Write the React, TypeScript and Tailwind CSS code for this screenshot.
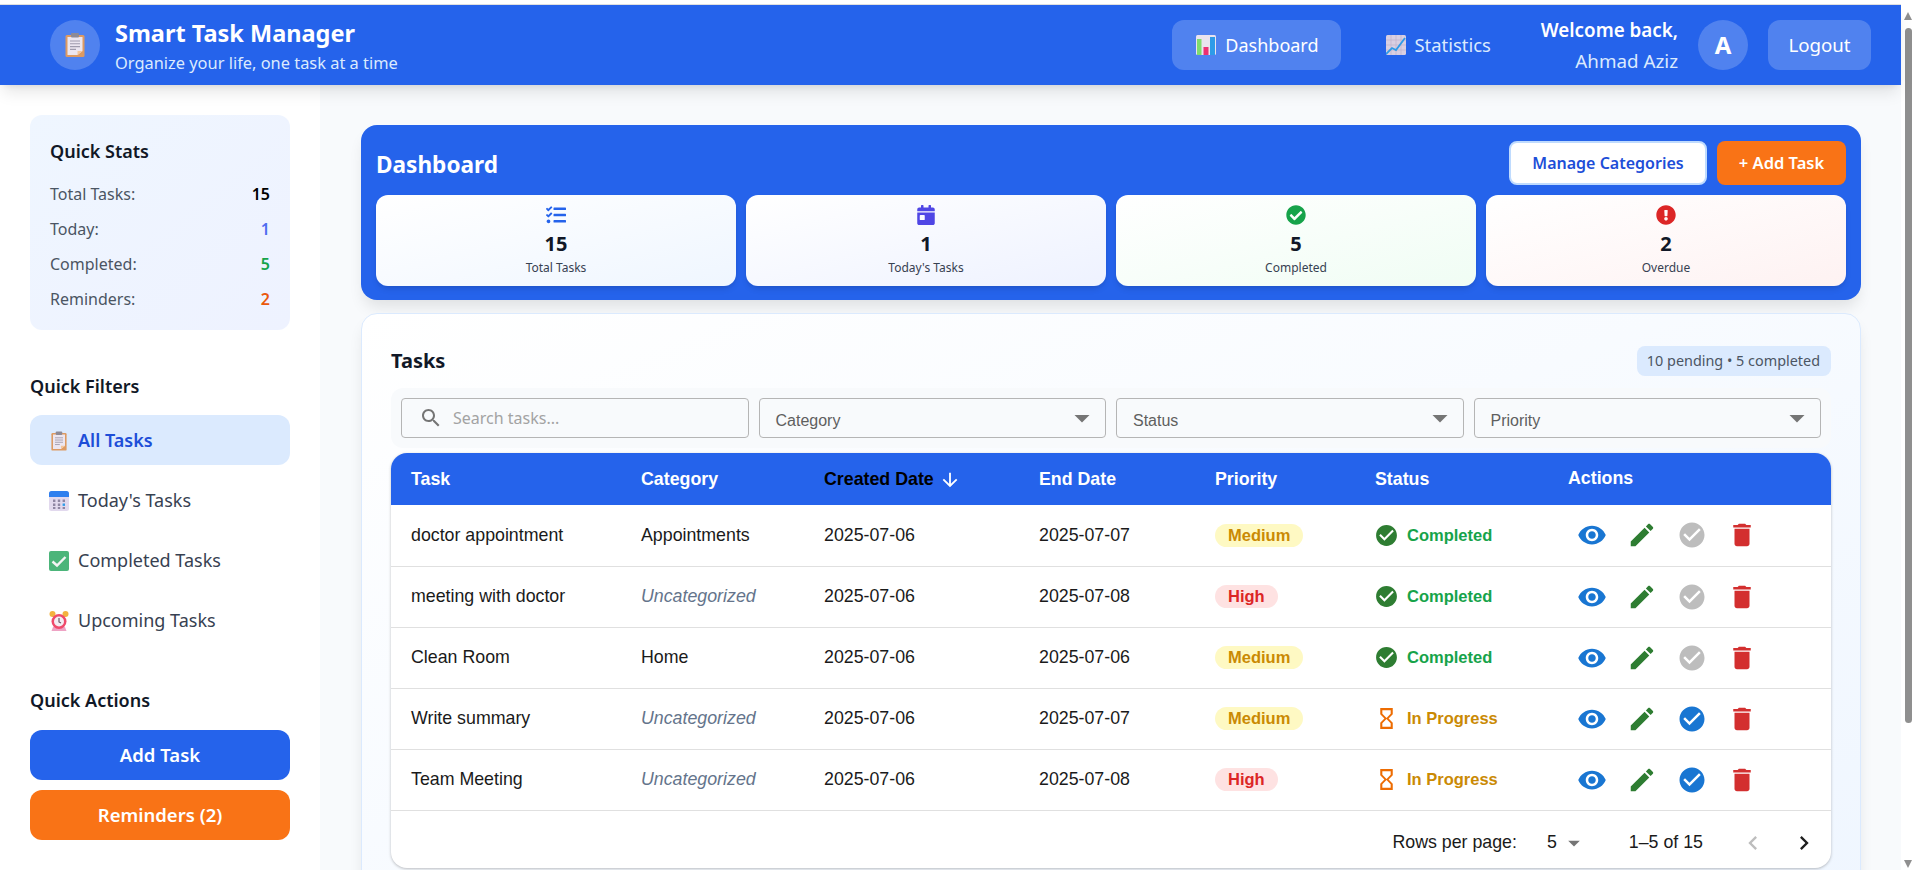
import { FaCalendarDay, FaCheckCircle, FaExclamationCircle, FaTasks } from "react-icons/fa";

const paths = {
  check: "M12 2C6.48 2 2 6.48 2 12s4.48 10 10 10 10-4.48 10-10S17.52 2 12 2zm-2 15l-5-5 1.41-1.41L10 14.17l7.59-7.59L19 8l-9 9z",
  hourglass: "M6 2v6h.01L6 8.01 10 12l-4 4 .01.01H6V22h12v-5.99h-.01L18 16l-4-4 4-3.99-.01-.01H18V2H6zm10 14.5V20H8v-3.5l4-4 4 4zm-4-5l-4-4V4h8v3.5l-4 4z",
  eye: "M12 4.5C7 4.5 2.73 7.61 1 12c1.73 4.39 6 7.5 11 7.5s9.27-3.11 11-7.5c-1.73-4.39-6-7.5-11-7.5zM12 17c-2.76 0-5-2.24-5-5s2.24-5 5-5 5 2.24 5 5-2.24 5-5 5zm0-8c-1.66 0-3 1.34-3 3s1.34 3 3 3 3-1.34 3-3-1.34-3-3-3z",
  edit: "M3 17.25V21h3.75L17.81 9.94l-3.75-3.75L3 17.25zM20.71 7.04c.39-.39.39-1.02 0-1.41l-2.34-2.34c-.39-.39-1.02-.39-1.41 0l-1.83 1.83 3.75 3.75 1.83-1.83z",
  trash: "M6 19c0 1.1.9 2 2 2h8c1.1 0 2-.9 2-2V7H6v12zM19 4h-3.5l-1-1h-5l-1 1H5v2h14V4z",
  arrowDown: "M20 12l-1.41-1.41L13 16.17V4h-2v12.17l-5.58-5.59L4 12l8 8 8-8z",
  search: "M15.5 14h-.79l-.28-.27C15.41 12.59 16 11.11 16 9.5 16 5.91 13.09 3 9.5 3S3 5.91 3 9.5 5.91 16 9.5 16c1.61 0 3.09-.59 4.23-1.57l.27.28v.79l5 4.99L20.49 19l-4.99-5zm-6 0C7.01 14 5 11.99 5 9.5S7.01 5 9.5 5 14 7.01 14 9.5 11.99 14 9.5 14z",
  dropDown: "M7 10l5 5 5-5z",
  chevronLeft: "M15.41 7.41 14 6l-6 6 6 6 1.41-1.41L10.83 12z",
  chevronRight: "M10 6 8.59 7.41 13.17 12l-4.58 4.59L10 18l6-6z",
};

function Icon({ d, className }: { d: string; className: string }) {
  return (
    <svg viewBox="0 0 24 24" fill="currentColor" className={className}>
      <path d={d} />
    </svg>
  );
}

function ClipboardEmoji({ className }: { className: string }) {
  return (
    <svg viewBox="0 0 20 24" className={className}>
      <rect x="0.5" y="2" width="19" height="22" rx="1.5" fill="#dd9a62" />
      <path d="M2.5 4h15v14l-5 4h-10z" fill="#ece6f0" />
      <path d="M12.5 22l5-4h-5z" fill="#f3c59a" />
      <rect x="6" y="0" width="8" height="4.5" rx="1" fill="#8d8a96" />
      <path d="M5 8h10M5 10.8h10M5 13.6h10M5 16.4h6" stroke="#a09cad" strokeWidth="1.1" />
    </svg>
  );
}

function BarsEmoji({ className }: { className: string }) {
  return (
    <svg viewBox="0 0 20 20" className={className}>
      <rect width="20" height="20" rx="1.5" fill="#e9e3ee" />
      <rect x="1" y="4" width="4.5" height="16" fill="#7fdc6e" />
      <rect x="7.5" y="12" width="5" height="8" fill="#ee2f72" />
      <rect x="14" y="2" width="5" height="18" fill="#2f9be8" />
    </svg>
  );
}

function LineEmoji({ className }: { className: string }) {
  return (
    <svg viewBox="0 0 20 20" className={className}>
      <rect width="20" height="20" rx="1.5" fill="#d9cfe2" />
      <path d="M0 5h20M0 10h20M0 15h20M5 0v20M10 0v20M15 0v20" stroke="#bfb2cc" strokeWidth="0.7" />
      <path d="M0 19l6-6 4 2L19 3" fill="none" stroke="#2f9be8" strokeWidth="1.8" />
    </svg>
  );
}

function CalendarEmoji({ className }: { className: string }) {
  return (
    <svg viewBox="0 0 20 20" className={className}>
      <rect width="20" height="20" rx="2.5" fill="#e2d9ee" />
      <path d="M0 6V2.5A2.5 2.5 0 0 1 2.5 0h15A2.5 2.5 0 0 1 20 2.5V6z" fill="#2f7fee" />
      <path d="M4 8.5h2.4v2.4H4zM8.8 8.5h2.4v2.4H8.8zM13.6 8.5H16v2.4h-2.4zM4 12.5h2.4v2.4H4zM8.8 12.5h2.4v2.4H8.8zM4 16h2.4v2H4zM8.8 16h2.4v2H8.8zM13.6 16H16v2h-2.4z" fill="#8f86a3" />
      <path d="M13.6 12.5H16v2.4h-2.4z" fill="#2f9be8" />
    </svg>
  );
}

function CheckEmoji({ className }: { className: string }) {
  return (
    <svg viewBox="0 0 20 20" className={className}>
      <rect width="20" height="20" rx="2" fill="#4cb57a" />
      <path d="M3.5 10.5l4.5 4 8.5-8.5" fill="none" stroke="#f4f4f4" strokeWidth="2.4" />
    </svg>
  );
}

function AlarmEmoji({ className }: { className: string }) {
  return (
    <svg viewBox="0 0 20 20" className={className}>
      <circle cx="3.5" cy="3" r="3" fill="#f3b23f" />
      <circle cx="16.5" cy="3" r="3" fill="#f3b23f" />
      <path d="M4 16l-1.5 4h15L16 16z" fill="#eea3c4" />
      <circle cx="10" cy="10.5" r="7.5" fill="#ef4a6b" />
      <circle cx="10" cy="10.5" r="5" fill="#f3edf3" />
      <path d="M10 7v4l2 1" fill="none" stroke="#6b5a6a" strokeWidth="1.2" />
    </svg>
  );
}

const quickStats = [
  { label: "Total Tasks:", value: "15", color: "text-black" },
  { label: "Today:", value: "1", color: "text-[#4f6ef0]" },
  { label: "Completed:", value: "5", color: "text-[#16a34a]" },
  { label: "Reminders:", value: "2", color: "text-[#ea580c]" },
];

const quickFilters = [
  { label: "All Tasks", icon: <ClipboardEmoji className="h-5 w-4" />, active: true },
  { label: "Today's Tasks", icon: <CalendarEmoji className="h-5 w-5" />, active: false },
  { label: "Completed Tasks", icon: <CheckEmoji className="h-5 w-5" />, active: false },
  { label: "Upcoming Tasks", icon: <AlarmEmoji className="h-5 w-5" />, active: false },
];

const statCards = [
  { label: "Total Tasks", value: "15", icon: <FaTasks className="h-5 w-5 text-[#2563eb]" />, bg: "to-[#eff6ff]" },
  { label: "Today's Tasks", value: "1", icon: <FaCalendarDay className="h-5 w-5 text-[#4f46e5]" />, bg: "to-[#eef2ff]" },
  { label: "Completed", value: "5", icon: <FaCheckCircle className="h-5 w-5 text-[#16a34a]" />, bg: "to-[#f0fdf4]" },
  { label: "Overdue", value: "2", icon: <FaExclamationCircle className="h-5 w-5 text-[#dc2626]" />, bg: "to-[#fef2f2]" },
];

const tasks = [
  { name: "doctor appointment", category: "Appointments", created: "2025-07-06", end: "2025-07-07", priority: "Medium", done: true },
  { name: "meeting with doctor", category: "", created: "2025-07-06", end: "2025-07-08", priority: "High", done: true },
  { name: "Clean Room", category: "Home", created: "2025-07-06", end: "2025-07-06", priority: "Medium", done: true },
  { name: "Write summary", category: "", created: "2025-07-06", end: "2025-07-07", priority: "Medium", done: false },
  { name: "Team Meeting", category: "", created: "2025-07-06", end: "2025-07-08", priority: "High", done: false },
];

function SelectBox({ label }: { label: string }) {
  return (
    <div className="flex h-10 items-center justify-between rounded-[4px] border border-[#b5b5b5] pr-[5px] pl-4">
      <span className="pt-[6px] text-[16px] text-[#5f5f5f]">{label}</span>
      <Icon d={paths.dropDown} className="h-9 w-9 text-[#757575]" />
    </div>
  );
}

function Sidebar() {
  return (
    <aside className="flex w-80 shrink-0 flex-col bg-white px-[30px] pt-[30px] text-[#1f2937]">
      <div className="h-[215px] shrink-0 rounded-xl bg-gradient-to-br from-[#eff6ff] to-[#eef2ff] px-5 pt-[22px]">
        <h3 className="mb-[11px] text-[18px] leading-[28px] font-semibold text-[#111827]">Quick Stats</h3>
        {quickStats.map((stat) => (
          <div key={stat.label} className="flex h-[35px] items-center justify-between text-[16px] text-[#4b5563]">
            <span>{stat.label}</span>
            <span className={`font-semibold ${stat.color}`}>{stat.value}</span>
          </div>
        ))}
      </div>

      <h3 className="mt-[42px] mb-[15px] text-[18px] leading-[28px] font-semibold text-[#111827]">Quick Filters</h3>
      <div className="flex flex-col gap-[10px]">
        {quickFilters.map((filter) => (
          <div
            key={filter.label}
            className={`flex h-[50px] items-center rounded-xl pt-[1px] pl-[19px] text-[18px] ${
              filter.active ? "bg-[#dbeafe] font-semibold text-[#1d4ed8]" : "text-[#374151]"
            }`}
          >
            <span className="flex w-5 justify-center">{filter.icon}</span>
            <span className="ml-[9px]">{filter.label}</span>
          </div>
        ))}
      </div>

      <h3 className="mt-[41px] mb-4 text-[18px] leading-[28px] font-semibold text-[#111827]">Quick Actions</h3>
      <div className="flex h-[50px] shrink-0 items-center justify-center rounded-xl bg-[#2563eb] text-[18.5px] font-semibold text-white">
        Add Task
      </div>
      <div className="mt-[10px] flex h-[50px] shrink-0 items-center justify-center rounded-xl bg-[#f97316] text-[18.5px] font-semibold text-white">
        Reminders (2)
      </div>
    </aside>
  );
}

function Scrollbar() {
  return (
    <div className="flex w-[11px] shrink-0 flex-col items-end bg-white pt-3 pb-[2px]">
      <div className="h-0 w-0 border-x-[4px] border-b-[8px] border-x-transparent border-b-[#8f8f8f]" />
      <div className="mt-2 h-[695px] w-[7px] rounded-t-[4px] rounded-b-[4px] bg-[#8f8f8f]" />
      <div className="mt-auto h-0 w-0 border-x-[4px] border-t-[8px] border-x-transparent border-t-[#8f8f8f]" />
    </div>
  );
}

export default function App() {
  return (
    <div className="flex h-[870px] overflow-hidden bg-white font-['Noto_Sans',sans-serif]">
      <div className="flex min-w-0 flex-1 flex-col">
        <div className="h-[5px] shrink-0 border-b border-[#e0e0e0] bg-white" />
        <header className="relative z-10 flex h-20 shrink-0 items-center bg-[#2563eb] pr-[30px] pl-[50px] text-white shadow-[0_10px_15px_-3px_rgba(0,0,0,0.1),0_4px_6px_-4px_rgba(0,0,0,0.1)]">
          <div className="flex h-[50px] w-[50px] items-center justify-center rounded-full bg-white/20">
            <ClipboardEmoji className="h-6 w-5" />
          </div>
          <div className="ml-[15px] pt-[3px]">
            <h1 className="text-[23.5px] leading-[30px] font-bold">Smart Task Manager</h1>
            <p className="mt-[3px] text-[16.4px] leading-[24px] text-[#dbeafe]">Organize your life, one task at a time</p>
          </div>
          <nav className="ml-auto flex items-center gap-[25px] text-[18px]">
            <div className="flex h-[50px] items-center gap-[9px] rounded-xl bg-white/20 pr-[22px] pl-6">
              <BarsEmoji className="h-5 w-5" />
              Dashboard
            </div>
            <div className="flex h-[50px] items-center gap-[9px] px-5 text-[18.4px] text-[#dbeafe]">
              <LineEmoji className="h-5 w-5" />
              Statistics
            </div>
          </nav>
          <div className="ml-[30px] pt-[2px] text-right text-[18.8px] leading-[31px]">
            <div className="font-semibold">Welcome back,</div>
            <div className="text-[#dbeafe]">Ahmad Aziz</div>
          </div>
          <div className="ml-5 flex h-[50px] w-[50px] items-center justify-center rounded-full bg-white/20 text-[24px] font-bold">
            A
          </div>
          <div className="ml-5 flex h-[50px] w-[103px] items-center justify-center rounded-xl bg-white/20 text-[18.7px]">
            Logout
          </div>
        </header>

        <div className="flex min-h-0 flex-1">
          <Sidebar />
          <main className="min-w-0 flex-1 bg-[#f8fafc] pt-10 pr-10 pl-[41px]">
            <section className="h-[175px] rounded-2xl bg-[#2563eb] px-[15px] pt-4 shadow-[0_10px_15px_-3px_rgba(0,0,0,0.1)]">
              <div className="flex h-[44px] items-center justify-between">
                <h2 className="pt-[3px] text-[22.6px] font-bold text-white">Dashboard</h2>
                <div className="flex gap-[10px]">
                  <div className="flex h-[44px] w-[198px] items-center justify-center rounded-lg border-2 border-[#bfdbfe] bg-white text-[16px] font-semibold text-[#1d4ed8]">
                    Manage Categories
                  </div>
                  <div className="flex h-[44px] w-[129px] items-center justify-center rounded-lg bg-[#f97316] text-[16.5px] font-semibold text-white">
                    + Add Task
                  </div>
                </div>
              </div>
              <div className="mt-[10px] grid grid-cols-4 gap-[10px]">
                {statCards.map((card) => (
                  <div
                    key={card.label}
                    className={`flex h-[91px] flex-col items-center rounded-xl bg-gradient-to-br from-white pt-[10px] shadow-md ${card.bg}`}
                  >
                    {card.icon}
                    <div className="mt-[5px] text-[20px] leading-[28px] font-bold text-[#111827]">{card.value}</div>
                    <div className="mt-[1px] text-[12px] leading-[18px] text-[#374151]">{card.label}</div>
                  </div>
                ))}
              </div>
            </section>

            <section className="mt-[13px] h-[600px] rounded-2xl border border-[#dbeafe] bg-gradient-to-br from-white to-[#eff6ff] px-[29px] pt-[32px] shadow-[0_10px_15px_-3px_rgba(0,0,0,0.1)]">
              <div className="flex h-[30px] items-center justify-between">
                <h2 className="text-[20px] font-bold text-[#111827]">Tasks</h2>
                <span className="flex h-[30px] items-center rounded-lg bg-[#dbeafe] pr-[11px] pl-[10px] text-[14.4px] text-[#4b5563]">
                  10 pending • 5 completed
                </span>
              </div>

              <div className="mt-3 grid h-[60px] grid-cols-4 gap-[10px] rounded-xl bg-[#f8fafc] p-[10px] font-['Liberation_Sans',Arial,sans-serif]">
                <div className="flex h-10 items-center rounded-[4px] border border-[#b5b5b5] pl-[17px]">
                  <Icon d={paths.search} className="h-6 w-6 text-[#757575]" />
                  <span className="ml-[10px] font-['Noto_Sans',sans-serif] text-[16px] text-[#a3a3a3]">Search tasks...</span>
                </div>
                <SelectBox label="Category" />
                <SelectBox label="Status" />
                <SelectBox label="Priority" />
              </div>

              <div className="mt-[5px] h-[415px] overflow-hidden rounded-2xl bg-white font-['Liberation_Sans',Arial,sans-serif] shadow-[0_1px_3px_rgba(0,0,0,0.25)]">
                <table className="w-full table-fixed border-collapse text-left text-[17.8px] text-[#1a1a1a]">
                  <colgroup>
                    <col className="w-[230px]" />
                    <col className="w-[183px]" />
                    <col className="w-[215px]" />
                    <col className="w-[176px]" />
                    <col className="w-[160px]" />
                    <col className="w-[193px]" />
                    <col />
                  </colgroup>
                  <thead>
                    <tr className="h-[52px] bg-[#2563eb] font-bold text-white">
                      <th className="pt-[1px] pl-5">Task</th>
                      <th className="pt-[1px] pl-5">Category</th>
                      <th className="pt-[1px] pl-5 text-black">
                        <span className="flex items-center">
                          Created Date
                          <Icon d={paths.arrowDown} className="ml-[5px] h-[22px] w-[22px] text-white" />
                        </span>
                      </th>
                      <th className="pt-[1px] pl-5">End Date</th>
                      <th className="pt-[1px] pl-5">Priority</th>
                      <th className="pt-[1px] pl-5">Status</th>
                      <th className="pb-[2px] pl-5">Actions</th>
                    </tr>
                  </thead>
                  <tbody>
                    {tasks.map((task) => (
                      <tr key={task.name} className="h-[61px] border-b border-[#e0e0e0]">
                        <td className="pl-5">{task.name}</td>
                        <td className="pl-5">
                          {task.category || <span className="text-[#64748b] italic">Uncategorized</span>}
                        </td>
                        <td className="pl-5">{task.created}</td>
                        <td className="pl-5">{task.end}</td>
                        <td className="pl-5">
                          <span
                            className={`inline-flex h-[23px] items-center rounded-full px-[13px] text-[16.5px] font-bold ${
                              task.priority === "High" ? "bg-[#fee2e2] text-[#dc2626]" : "bg-[#fef9c3] text-[#ca8a04]"
                            }`}
                          >
                            {task.priority}
                          </span>
                        </td>
                        <td className="pl-[19px]">
                          <div
                            className={`flex items-center gap-2 text-[16.5px] font-bold ${
                              task.done ? "text-[#16a34a]" : "text-[#ca8a04]"
                            }`}
                          >
                            <Icon
                              d={task.done ? paths.check : paths.hourglass}
                              className={`h-[25px] w-[25px] ${task.done ? "text-[#2e7d32]" : "text-[#ed6c02]"}`}
                            />
                            {task.done ? "Completed" : "In Progress"}
                          </div>
                        </td>
                        <td className="pl-[29px]">
                          <div className="flex gap-5">
                            <Icon d={paths.eye} className="h-[30px] w-[30px] text-[#1976d2]" />
                            <Icon d={paths.edit} className="h-[30px] w-[30px] text-[#2e7d32]" />
                            <Icon d={paths.check} className={`h-[30px] w-[30px] ${task.done ? "text-[#bdbdbd]" : "text-[#1976d2]"}`} />
                            <Icon d={paths.trash} className="h-[30px] w-[30px] text-[#d32f2f]" />
                          </div>
                        </td>
                      </tr>
                    ))}
                  </tbody>
                </table>
                <div className="flex h-16 items-center justify-end pr-[13px] text-[17.8px] text-[#1a1a1a]">
                  <span>Rows per page:</span>
                  <span className="ml-[30px]">5</span>
                  <Icon d={paths.dropDown} className="ml-[3px] h-7 w-7 text-[#757575]" />
                  <span className="ml-[41px]">1–5 of 15</span>
                  <Icon d={paths.chevronLeft} className="ml-9 h-7 w-7 text-[#bdbdbd]" />
                  <Icon d={paths.chevronRight} className="ml-[23px] h-7 w-7 text-[#1f1f1f]" />
                </div>
              </div>
            </section>
          </main>
        </div>
      </div>
      <Scrollbar />
    </div>
  );
}
